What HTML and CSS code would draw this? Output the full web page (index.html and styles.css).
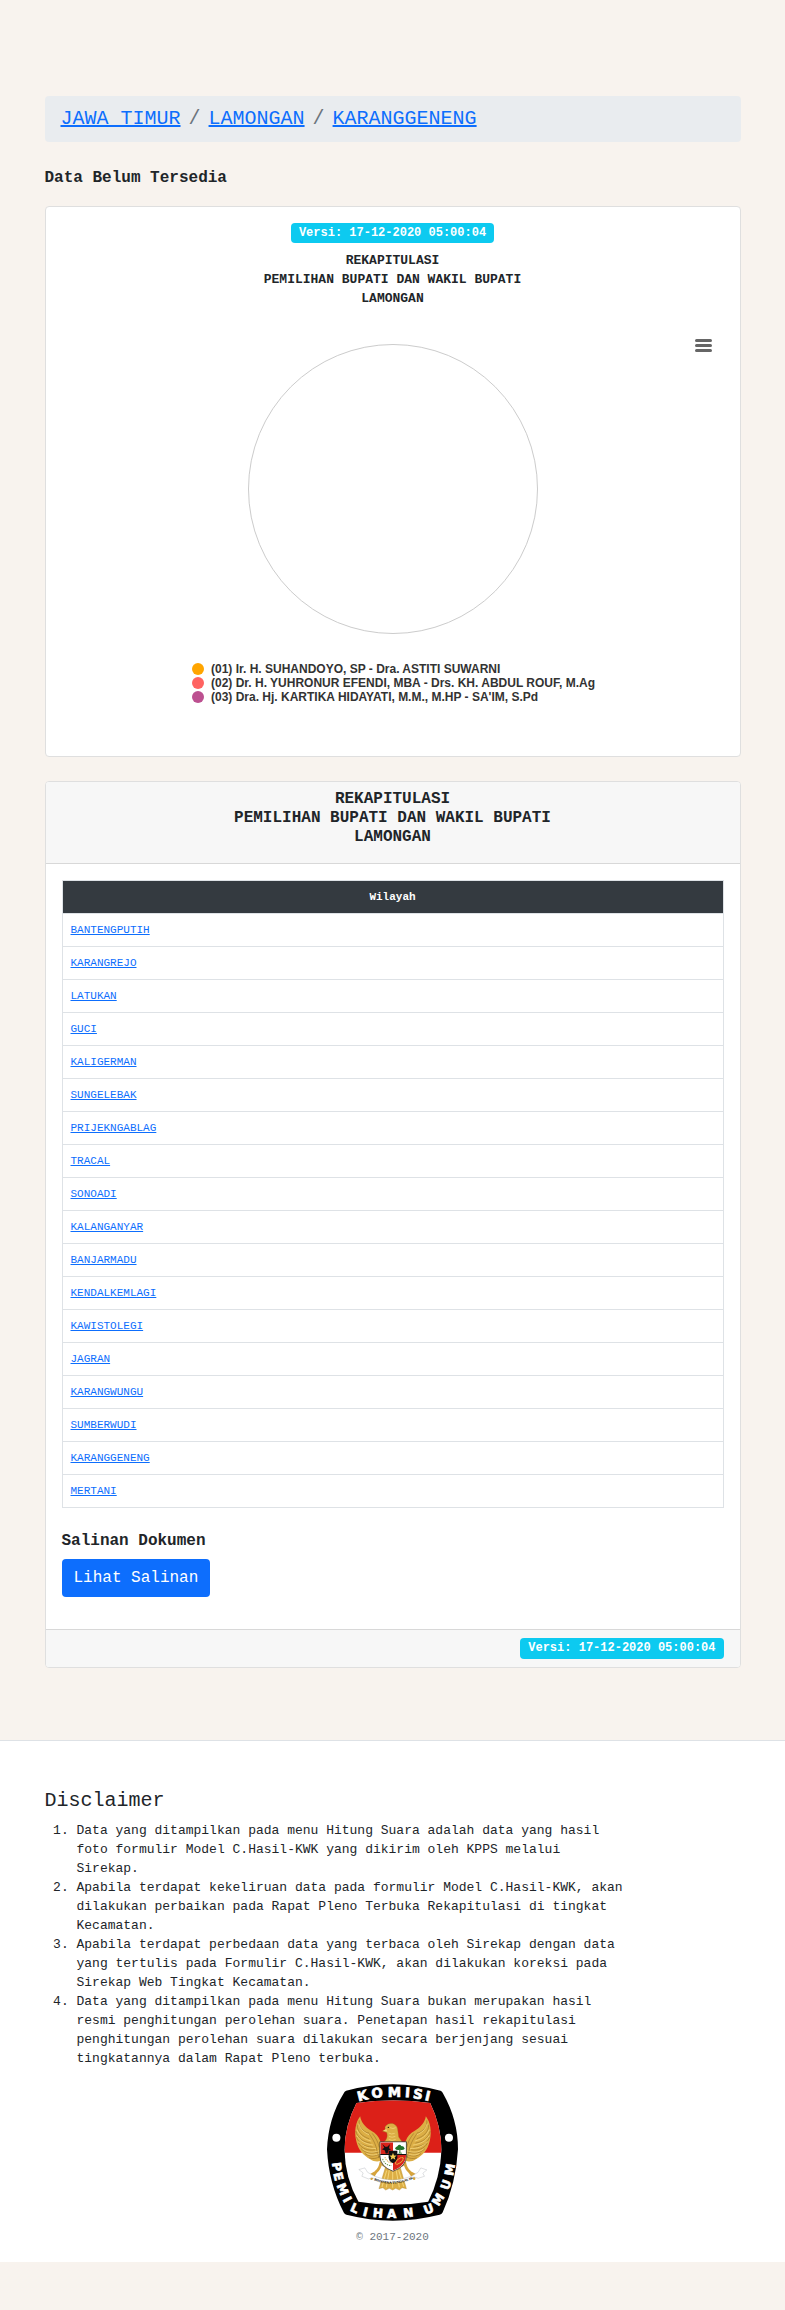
FILE: index.html
```html
<!DOCTYPE html>
<html lang="id">
<head>
<meta charset="utf-8">
<meta name="viewport" content="width=device-width, initial-scale=1">
<title>Hitung Suara - Karanggeneng</title>
<link rel="stylesheet" href="styles.css">
</head>
<body>
<main class="container">
  <nav aria-label="breadcrumb">
    <ol class="breadcrumb">
      <li><a href="#">JAWA TIMUR</a></li>
      <li><a href="#">LAMONGAN</a></li>
      <li><a href="#">KARANGGENENG</a></li>
    </ol>
  </nav>
  <h2 class="notice">Data Belum Tersedia</h2>

  <section class="card chart-card">
    <span class="badge">Versi: 17-12-2020 05:00:04</span>
    <h3 class="chart-title">REKAPITULASI<br>PEMILIHAN BUPATI DAN WAKIL BUPATI<br>LAMONGAN</h3>
    <div class="chart">
      <button class="chart-menu" type="button" aria-label="Menu grafik">
        <svg width="17" height="13" viewBox="0 0 17 13" aria-hidden="true"><path d="M1.5 1.5h14M1.5 6.5h14M1.5 11.5h14" stroke="#666" stroke-width="3" stroke-linecap="round"/></svg>
      </button>
      <svg class="pie" viewBox="0 0 290 290" aria-hidden="true"><circle cx="145" cy="145" r="144.5" fill="none" stroke="#ccc"/></svg>
      <ul class="legend">
        <li><span class="dot orange"></span>(01) Ir. H. SUHANDOYO, SP - Dra. ASTITI SUWARNI</li>
        <li><span class="dot coral"></span>(02) Dr. H. YUHRONUR EFENDI, MBA - Drs. KH. ABDUL ROUF, M.Ag</li>
        <li><span class="dot plum"></span>(03) Dra. Hj. KARTIKA HIDAYATI, M.M., M.HP - SA'IM, S.Pd</li>
      </ul>
    </div>
  </section>

  <section class="card">
    <header class="card-header">
      <h3 class="heading">REKAPITULASI<br>PEMILIHAN BUPATI DAN WAKIL BUPATI<br>LAMONGAN</h3>
    </header>
    <div class="card-body">
      <table class="regions">
        <thead><tr><th scope="col">Wilayah</th></tr></thead>
        <tbody>
          <tr><td><a href="#">BANTENGPUTIH</a></td></tr>
          <tr><td><a href="#">KARANGREJO</a></td></tr>
          <tr><td><a href="#">LATUKAN</a></td></tr>
          <tr><td><a href="#">GUCI</a></td></tr>
          <tr><td><a href="#">KALIGERMAN</a></td></tr>
          <tr><td><a href="#">SUNGELEBAK</a></td></tr>
          <tr><td><a href="#">PRIJEKNGABLAG</a></td></tr>
          <tr><td><a href="#">TRACAL</a></td></tr>
          <tr><td><a href="#">SONOADI</a></td></tr>
          <tr><td><a href="#">KALANGANYAR</a></td></tr>
          <tr><td><a href="#">BANJARMADU</a></td></tr>
          <tr><td><a href="#">KENDALKEMLAGI</a></td></tr>
          <tr><td><a href="#">KAWISTOLEGI</a></td></tr>
          <tr><td><a href="#">JAGRAN</a></td></tr>
          <tr><td><a href="#">KARANGWUNGU</a></td></tr>
          <tr><td><a href="#">SUMBERWUDI</a></td></tr>
          <tr><td><a href="#">KARANGGENENG</a></td></tr>
          <tr><td><a href="#">MERTANI</a></td></tr>
        </tbody>
      </table>
      <h3 class="heading">Salinan Dokumen</h3>
      <button class="btn" type="button">Lihat Salinan</button>
    </div>
    <footer class="card-footer"><span class="badge">Versi: 17-12-2020 05:00:04</span></footer>
  </section>
</main>

<footer class="site-footer">
  <div class="container">
    <h2 class="disclaimer-title">Disclaimer</h2>
    <ol class="disclaimer">
      <li>Data yang ditampilkan pada menu Hitung Suara adalah data yang hasil foto formulir Model C.Hasil-KWK yang dikirim oleh KPPS melalui Sirekap.</li>
      <li>Apabila terdapat kekeliruan data pada formulir Model C.Hasil-KWK, akan dilakukan perbaikan pada Rapat Pleno Terbuka Rekapitulasi di tingkat Kecamatan.</li>
      <li>Apabila terdapat perbedaan data yang terbaca oleh Sirekap dengan data yang tertulis pada Formulir C.Hasil-KWK, akan dilakukan koreksi pada Sirekap Web Tingkat Kecamatan.</li>
      <li>Data yang ditampilkan pada menu Hitung Suara bukan merupakan hasil resmi penghitungan perolehan suara. Penetapan hasil rekapitulasi penghitungan perolehan suara dilakukan secara berjenjang sesuai tingkatannya dalam Rapat Pleno terbuka.</li>
    </ol>
    <div class="brand">
      <svg class="logo" viewBox="52 44 391 408" role="img" aria-label="Komisi Pemilihan Umum">
        <defs>
          <clipPath id="inner"><path d="M140 100Q250 84 360 100Q392 165 394 240Q390 325 354 395Q250 413 146 395Q106 325 104 240Q106 165 140 100Z"/></clipPath>
          <g id="wing">
            <path fill="#dcae45" d="M151 140C137 158 133 186 139 212C145 242 163 258 181 268C193 277 208 276 222 270L224 226L211 214C207 201 198 190 184 183C165 172 154 158 151 140Z"/>
            <g fill="none" stroke="#8d6720" stroke-width="1.5">
              <path d="M148 152C146 174 160 184 174 190M142 165C143 188 158 200 178 207M138 184C144 207 161 216 182 220M140 202C148 224 165 230 188 232M146 220C156 237 174 243 195 240M154 237C168 250 184 252 202 247M165 251C180 262 195 260 208 252M178 264C193 269 205 264 214 257"/>
              <path d="M174 187C184 200 194 216 198 230S204 255 207 264M187 191C198 204 205 218 208 233"/>
            </g>
            <g fill="none" stroke="#f7dc88" stroke-width="2">
              <path d="M147 162C152 181 164 189 178 195M141 180C150 200 164 208 184 214M141 197C152 216 168 222 190 226M147 215C160 231 177 237 198 236M158 238C174 249 189 249 207 243M170 251C184 258 199 256 212 249"/>
            </g>
          </g>
        </defs>
        <path d="M109 64Q248 25 391 64Q396 66 398 71Q443 150 443 238Q437 340 397 427Q394 433 388 434Q248 469 110 434Q105 432 102 427Q57 340 52 238Q56 145 102 71Q104 66 109 64Z"/>
        <g clip-path="url(#inner)"><path fill="#fff" d="M100 80h300v340H100z"/><path fill="#dc2018" d="M100 80h300v169H100z"/></g>
        <circle cx="80" cy="204" r="12" fill="#fff"/><circle cx="416" cy="204" r="12" fill="#fff"/>
        <g class="logo-text">
          <text font-size="40" x="146 186 233 284 307 342" y="96 86 82 82 85 91" rotate="-14 -7 0 4 9 13">KOMISI</text>
          <text font-size="36" x="67 71 80 98 119 157 188 231 281" y="279 311 346 388 421 436 440 443 442" rotate="82 76 68 62 24 14 6 0 -6">PEMILIHAN</text>
          <text font-size="36" x="346 385 414 428" y="434 410 362 319" rotate="-20 -58 -70 -80">UMUM</text>
        </g>
        <use href="#wing"/><use href="#wing" transform="translate(498 0) scale(-1 1)"/>
        <path fill="#dcae45" stroke="#94701f" stroke-width="1" d="M218 219C231 211 234 199 230 188L217 184L229 181C220 174 228 164 239 162C250 159 262 166 263 180L266 202L278 219L284 285L248 306L214 285Z"/>
        <path fill="none" stroke="#f8dc83" stroke-width="2" d="M236 190q8 5 18 1m-17 9q9 5 19 0m-20 9q10 6 21 0m0-35q-8 5-17 0"/><circle cx="235" cy="173" r="2"/><path fill="#f0d57b" d="M229 177l-10 6 13 2z"/>
        <path fill="#dcae45" stroke="#a67b24" d="M227 290L207 356L219 353L227 360L238 355L248 360L257 355L268 360L276 353L289 356L270 290Z"/>
        <path fill="none" stroke="#f3d57a" stroke-width="3" d="M230 302l-14 49M238 300l-9 52M248 300v53M258 300l10 52M266 301l15 49"/>
        <path fill="none" stroke="#d6a33b" stroke-width="8" stroke-linecap="round" d="M213 278q-3 19-15 28l-13 20M284 278q3 19 15 28l13 20M198 307l-18 10M299 307l19 10"/>
        <path fill="#fff" stroke="#9aa2a8" stroke-width="1" d="M147 299l18-5 8 13 21 12q54 22 110 0l20-12 8-13 18 6-12 10 5 9-19 6-12-4q-64 32-126 2l-10 4-20-8 4-10z"/>
        <path id="motto" fill="none" d="M192 331Q248 354 312 325"/><text font-size="10" font-weight="700" font-family="Liberation Serif, serif"><textPath href="#motto">BHINNEKA TUNGGAL IKA</textPath></text>
        <path fill="#fff" stroke="#111" stroke-width="2" d="M210 216h79v42q0 32-40 46q-39-14-39-46z"/>
        <path fill="#d9231a" d="M212 218h37v36h-37zM249 254h39q0 33-39 48z"/>
        <path fill="none" stroke="#111" stroke-width="3" d="M211 254h77"/>
        <path fill="#111" d="M217 223l9 8h6l8-8-3 12 6 3-8 4-2 9h-6l-2-9-9-4 7-4z"/>
        <path fill="#21752b" d="M255 237q1-6 7-8q7-8 12 0q8-1 10 8q-5 5-13 3v9h5v2h-12l4-3v-8q-8 2-13-3z"/>
        <path fill="none" stroke="#5c9142" stroke-width="3" stroke-dasharray="4 3" d="M218 267q7 20 27 20"/><path fill="none" stroke="#d5a83a" stroke-width="3" stroke-dasharray="3 3" d="M225 262q4 14 20 17"/>
        <ellipse cx="268" cy="273" rx="14" ry="6" transform="rotate(-38 268 273)" fill="none" stroke="#e8b63c" stroke-width="3" stroke-dasharray="4 1"/>
        <path fill="#111" d="M236 243h26v20q-2 12-13 17q-12-5-13-17z"/>
        <path fill="#f6cf51" d="M249 249l3 8h8l-6 5 2 8-7-5-7 5 2-8-6-5h8z"/>
      </svg>
      <small class="copyright">© 2017-2020</small>
    </div>
  </div>
</footer>
</body>
</html>
```
FILE: styles.css
```css
*, *::before, *::after { box-sizing: border-box; }

body {
  margin: 0;
  padding: 96px 0 48px;
  background: #f8f3ee;
  color: #212529;
  font: 16px/24px "Liberation Mono", monospace;
}

a { color: #0d6efd; }
h2, h3, ol, ul { margin: 0; padding: 0; }

.container { width: calc(100% - 48px); max-width: 696px; margin: 0 auto; }

.breadcrumb {
  display: flex;
  flex-wrap: wrap;
  margin-bottom: 27px;
  padding: 8px 16px;
  border-radius: 4px;
  background: #e9ecef;
  font-size: 20px;
  line-height: 30px;
  list-style: none;
}
.breadcrumb li + li::before { content: "/"; padding: 0 8px; color: #6c757d; }

.notice, .heading { font-size: 16px; line-height: 19px; font-weight: 700; }
.notice { margin-bottom: 18px; }

.card {
  margin-bottom: 24px;
  border: 1px solid #dfdfdf;
  border-radius: 4px;
  background: #fff;
  overflow: hidden;
}
.chart-card {
  display: flex;
  flex-direction: column;
  align-items: center;
  padding: 16px 16px 52px;
  text-align: center;
}

.badge {
  padding: 4px 8px;
  border-radius: 4px;
  background: #0dcaf0;
  color: #fff;
  font-size: 12px;
  line-height: 12px;
  font-weight: 700;
}
.chart-title { margin-top: 8px; font-size: 13px; line-height: 19px; }

.chart {
  position: relative;
  align-self: stretch;
  padding-top: 36px;
  font-family: "Liberation Sans", sans-serif;
}
.chart-menu {
  position: absolute;
  top: 27px;
  right: 8px;
  display: flex;
  padding: 4px;
  border: 0;
  background: none;
}
.pie { display: block; width: 290px; max-width: 100%; margin: 0 auto 28px; }
.legend {
  width: fit-content;
  margin: 0 auto;
  padding-left: 2px;
  color: #333;
  font-size: 12px;
  line-height: 14px;
  font-weight: 700;
  list-style: none;
  text-align: left;
}
.legend li { display: flex; align-items: center; gap: 7px; }
.dot { flex: none; width: 12px; height: 12px; border-radius: 50%; }
.orange { background: #ffa500; }
.coral { background: #ff6361; }
.plum { background: #bc5090; }

.card-header { padding: 8px 16px 16px; border-bottom: 1px solid #d8d8d8; background: #f7f7f7; text-align: center; }
.card-body { padding: 16px 16px 32px; }
.regions {
  width: 100%;
  margin-bottom: 24px;
  border-collapse: collapse;
  font-size: 11px;
  line-height: 16px;
}
.regions th, .regions td { height: 33px; padding: 8px; border: 1px solid #dee2e6; text-align: left; }
.regions th { background: #343a40; color: #fff; text-align: center; }
.card-body .heading { margin-bottom: 8px; }
.btn {
  display: block;
  padding: 6px 12px;
  border: 0;
  border-radius: 4px;
  background: #0d6efd;
  color: #fff;
  font: inherit;
  line-height: 26px;
}
.card-footer { display: flex; justify-content: flex-end; padding: 8px 16px; border-top: 1px solid #d8d8d8; background: #f7f7f7; }
.card-footer .badge { line-height: 13px; }

.site-footer { margin-top: 72px; padding: 48px 0 16px; border-top: 1px solid #dee2e6; background: #fff; }
.disclaimer-title { margin-bottom: 8px; font-size: 20px; line-height: 24px; font-weight: 400; }
.disclaimer { max-width: 580px; padding-left: 32px; font-size: 13px; line-height: 19px; }
.brand { display: flex; flex-direction: column; align-items: center; gap: 8px; padding-top: 16px; }
.logo { width: 131px; height: 137px; }
.logo-text { fill: #fff; stroke: #fff; stroke-width: 2px; font-family: "DejaVu Sans", sans-serif; font-weight: 700; }
.copyright { color: #6c757d; font-size: 11px; line-height: 17px; }
```
